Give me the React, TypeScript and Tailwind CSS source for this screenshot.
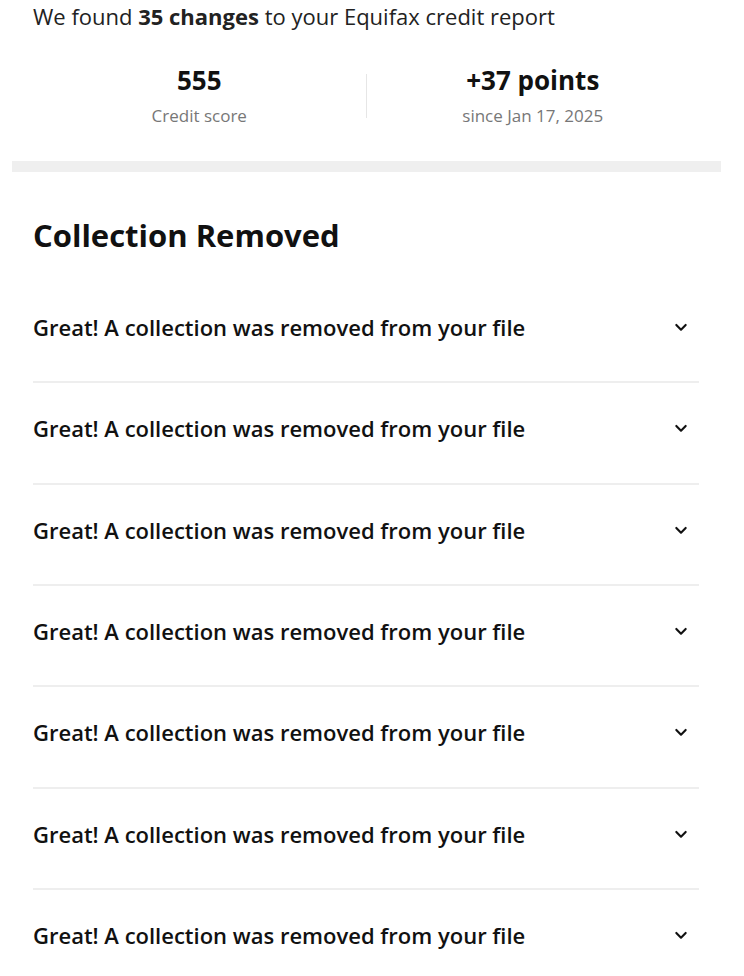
import React from "react";

function Chevron() {
  return (
    <svg width="16" height="16" viewBox="0 0 24 24" fill="none" stroke="#111" strokeWidth="3.2" strokeLinecap="round" strokeLinejoin="round">
      <path d="M5 9l7 7 7-7" />
    </svg>
  );
}

export default function App() {
  const rows = Array.from({ length: 7 });
  return (
    <div className="w-[744px] h-[976px] overflow-hidden bg-white text-[#111]" style={{ fontFamily: "'Open Sans', 'Liberation Sans', sans-serif" }}>
      <div className="pl-[33px] pt-[2px] text-[22px] leading-[28px] text-[#222]">
        We found <span className="font-bold">35 changes</span> to your Equifax credit report
      </div>
      <div className="ml-[33px] w-[666px] flex items-center pt-[34px]">
        <div className="flex-1 flex flex-col items-center">
          <div className="text-[26px] leading-[32px] font-bold">555</div>
          <div className="text-[17px] leading-[22px] text-[#777] mt-[9px]">Credit score</div>
        </div>
        <div className="w-px h-[44px] bg-[#e6e6e6]" />
        <div className="flex-1 flex flex-col items-center">
          <div className="text-[26px] leading-[32px] font-bold">+37 points</div>
          <div className="text-[17px] leading-[22px] text-[#777] mt-[9px]">since Jan 17, 2025</div>
        </div>
      </div>
      <div className="mx-[12px] w-[709px] h-[11px] bg-[#efefef] mt-[34px]" />
      <div className="pl-[33px] pt-[44px] text-[31px] leading-[38px] font-bold">Collection Removed</div>
      <div className="ml-[33px] w-[666px] mt-[28px]">
        {rows.map((_, i) => (
          <div key={i} className={`h-[101.33px] pt-[31px] pr-[10px] ${i < rows.length - 1 ? "border-b-2 border-[#eeeeee]" : ""}`}>
            <div className="flex items-center justify-between h-[28px]">
              <span className="text-[22px] font-semibold leading-[28px]">Great! A collection was removed from your file</span>
              <Chevron />
            </div>
          </div>
        ))}
      </div>
    </div>
  );
}
